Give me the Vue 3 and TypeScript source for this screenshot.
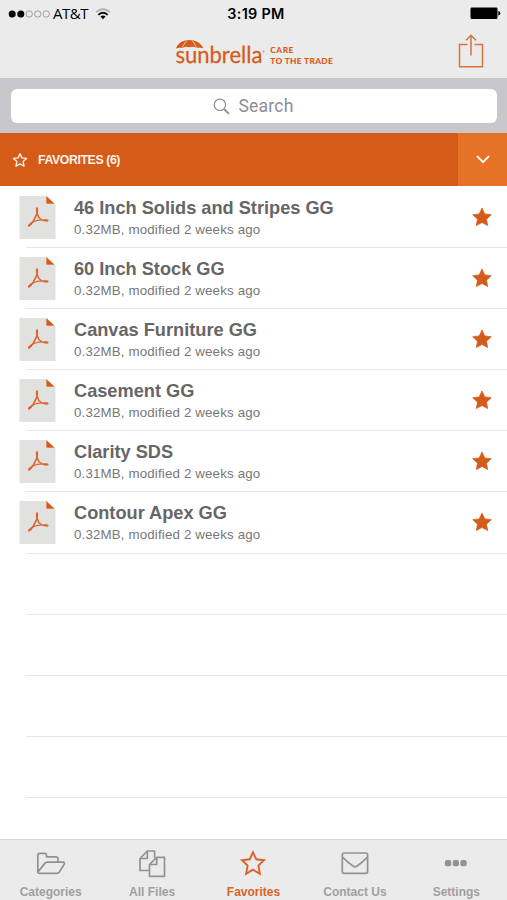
<script setup lang="ts">
interface FileRow {
  title: string
  size: string
}

const files: FileRow[] = [
  { title: '46 Inch Solids and Stripes GG', size: '0.32MB' },
  { title: '60 Inch Stock GG', size: '0.32MB' },
  { title: 'Canvas Furniture GG', size: '0.32MB' },
  { title: 'Casement GG', size: '0.32MB' },
  { title: 'Clarity SDS', size: '0.31MB' },
  { title: 'Contour Apex GG', size: '0.32MB' },
]

const tabs: string[] = ['Categories', 'All Files', 'Favorites', 'Contact Us', 'Settings']
const active = 'Favorites'
</script>

<template>
  <div class="screen">
    <header class="top">
      <div class="status">
        <div class="carrier">
          <svg width="42" height="10" viewBox="0 0 42 10">
            <circle cx="4.2" cy="5" r="3.5" />
            <circle cx="12.8" cy="5" r="3.5" />
            <g fill="none" stroke="#999" stroke-width=".9">
              <circle cx="21.2" cy="5" r="3.2" />
              <circle cx="29.7" cy="5" r="3.2" />
              <circle cx="38.2" cy="5" r="3.2" />
            </g>
          </svg>
          <span class="network">AT&amp;T</span>
          <svg class="wifi" width="16" height="12" viewBox="0 0 16 12">
            <path d="M1.2 4.2Q8-2 14.8 4.2" fill="none" stroke="#aaa" stroke-width="1.6" />
            <path d="M3.3 6.8Q8 2.6 12.7 6.8" fill="none" stroke="#111" stroke-width="1.8" />
            <path d="M5.4 8.6Q8 6.6 10.6 8.6L8 11.3Z" />
          </svg>
        </div>
        <span class="time">3:19 PM</span>
        <svg class="battery" width="31" height="13" viewBox="0 0 31 13">
          <rect x=".5" y=".5" width="27" height="11.6" rx="1.4" />
          <path d="M28.3 4q2 .4 2 2.3t-2 2.3z" />
        </svg>
      </div>
      <div class="nav">
        <svg class="logo" width="160" height="30" viewBox="0 0 160 30" fill="#d45c1a">
          <path d="M2 9.6C3.8 3.8 9.4 1 15.4 1s11.5 2.8 14 8.2l-3.1-.5-3.2.1-3.6-1.1-4.1.5-4-.5-3.1 1.2-3-.1Z" />
          <path d="M12.3 2 8 8.600M18.6 2l4.200 6.600" fill="none" stroke="#ebebeb" stroke-width=".7" />
          <text class="wordmark" x="1.4" y="24.2" textLength="87" lengthAdjust="spacingAndGlyphs">sunbrella</text>
          <circle cx="89.5" cy="12.5" r=".9" opacity=".6" />
          <text class="tagline" x="96.3" y="14" textLength="23" lengthAdjust="spacing">CARE</text>
          <text class="tagline" x="96.3" y="24.6" textLength="62.5" lengthAdjust="spacing">TO THE TRADE</text>
        </svg>
        <svg class="share" width="26" height="36" viewBox="0 0 26 36" fill="none" stroke="#d9733d" stroke-width="1.5">
          <path d="M9.5 10.5H1.5v22.3h23V10.5h-8M13 21.5V1.7M8 6.2l5-5 5 5" />
        </svg>
      </div>
    </header>

    <div class="search-bar">
      <div class="search-field">
        <svg width="17" height="17" viewBox="0 0 17 17" fill="none" stroke="#8e8e93">
          <circle cx="6.9" cy="6.8" r="5.7" stroke-width="1.2" />
          <path d="m11 11 5 4.800" stroke-width="1.8" />
        </svg>
        <span>Search</span>
      </div>
    </div>

    <div class="section">
      <div class="section-title">
        <svg width="16" height="16" viewBox="0 0 24 24" fill="none" stroke="#fff2e9" stroke-width="2" stroke-linejoin="round">
          <path d="m12 2.4 2.9 6.4 7 .8-5.2 4.8 1.4 6.9-6.1-3.4-6.1 3.4 1.4-6.9-5.2-4.8 7-.8Z" />
        </svg>
        <span>FAVORITES (6)</span>
      </div>
      <div class="section-toggle">
        <svg width="14" height="9" viewBox="0 0 14 9" fill="none" stroke="#fff" stroke-width="1.9">
          <path d="m1 1.2 6 6 6-6" />
        </svg>
      </div>
    </div>

    <main class="list">
      <div v-for="file in files" :key="file.title" class="row">
        <svg class="pdf" width="37" height="43" viewBox="0 0 37 43">
          <path d="M.5 0H27v8h9.500v42H.5Z" fill="#e1e1e0" />
          <path d="M27.300 0v7.800h8.400Z" fill="#d45c1a" />
          <g fill="none" stroke="#dc6531" stroke-linecap="round" stroke-linejoin="round">
            <path d="M18 12.300v5.500l-3.900 7.800-4.300 4" stroke-width="1.700" />
            <path d="M18.200 17.500l1.600 4 3.300 2.500 5.300.5" stroke-width="1.500" />
            <path d="M14 26l4.500-1.700 4.500-.4" stroke-width="1.200" />
            <path d="M18 12.600v3M10 29.500l2.200-1.900M25.500 24.300l2.900.2" stroke-width="2.200" />
          </g>
        </svg>
        <div class="info">
          <div class="title">{{ file.title }}</div>
          <div class="meta">{{ file.size }}, modified 2 weeks ago</div>
        </div>
        <svg class="star" width="20" height="20" viewBox="0 0 20 20" fill="#d45c1a" stroke="#d45c1a" stroke-width=".7" stroke-linejoin="round">
          <path d="m10 .9 2.800 6 6.500.8-4.800 4.500 1.200 6.400-5.700-3.100-5.700 3.100 1.200-6.400L.7 7.700l6.500-.8Z" />
        </svg>
      </div>
      <div v-for="n in 4" :key="n" class="row"></div>
    </main>

    <nav class="tabs">
      <div v-for="tab in tabs" :key="tab" class="tab" :class="{ active: tab === active }">
        <svg width="32" height="30" viewBox="0 0 32 30" fill="none" stroke="currentColor" stroke-width="1.7" stroke-linejoin="round">
          <path v-if="tab === 'Categories'" d="M2.800 23.200V6.400q0-2 2-2h4.700q2 0 2 2v1.400h9.300q2.200 0 2.200 2.200v3.200M2.800 23.200q.4 1.200 1.900 1.200h17.100q1.500 0 2.400-1.100l5-8.100q1-2-1.200-2H12.300q-1.500 0-2.500 1.200L3.200 22.600" />
          <g v-else-if="tab === 'All Files'">
            <path d="M13 21.500H4V9.500L11.300 2h7.300v7M11.300 2v7.500H4" />
            <path d="M13.500 15.500v11.800h15V8.300h-7.800L13.500 15.500h7.200V8.300" />
          </g>
          <path v-else-if="tab === 'Favorites'" d="m16 3.300 3.300 7 7.700.9-5.600 5.400 1.500 8.200-6.900-4.100-6.900 4.100 1.500-8.200L5 11.200l7.700-.9Z" stroke-linejoin="miter" stroke-width="1.900" />
          <g v-else-if="tab === 'Contact Us'">
            <rect x="3.300" y="4" width="25.300" height="20.300" rx="1.800" />
            <path d="M3.500 8.200q6 6 10.800 9.100 1.700 1.200 3.400 0Q22.500 14.200 28.500 8.200" />
          </g>
          <g v-else fill="currentColor" stroke="none">
            <rect x="4.900" y="11" width="6.300" height="6.300" rx="2" />
            <rect x="12.700" y="11" width="6.300" height="6.300" rx="2" />
            <rect x="20.400" y="11" width="6.300" height="6.300" rx="2" />
          </g>
        </svg>
        <span>{{ tab }}</span>
      </div>
    </nav>
  </div>
</template>

<style>
body {
  background: #fff;
}
</style>

<style scoped>
.screen {
  width: 507px;
  height: 900px;
  display: flex;
  flex-direction: column;
  background: #fff;
  font-family: "Liberation Sans", Arial, sans-serif;
  overflow: hidden;
}
svg {
  display: block;
  flex: none;
}
.top {
  height: 79px;
  flex: none;
  background: #ebebeb;
  border-bottom: 1px solid #c4c4c6;
  box-sizing: border-box;
}
.status {
  height: 27px;
  display: grid;
  grid-template-columns: 1fr auto 1fr;
  align-items: center;
  padding: 0 6px 0 8px;
}
.carrier {
  display: flex;
  align-items: center;
}
.network {
  margin-left: 3px;
  margin-top: -2px;
  font: 15px/20px "Open Sans", sans-serif;
  letter-spacing: -0.5px;
}
.wifi {
  margin-left: 7px;
}
.time {
  font: 600 14.4px/20px Inter, sans-serif;
  letter-spacing: 0.3px;
  padding: 1px 0 0 3px;
}
.battery {
  justify-self: end;
}
.nav {
  height: 51px;
  display: flex;
  justify-content: space-between;
  padding: 7px 23px 0 174px;
  box-sizing: border-box;
}
.logo {
  margin-top: 5px;
}
.wordmark {
  font: 23.5px Lato, sans-serif;
  text-rendering: geometricPrecision;
  stroke: #d45c1a;
  stroke-width: 0.25;
}
.tagline {
  font: 900 8.3px Lato, sans-serif;
  text-rendering: geometricPrecision;
}
.search-bar {
  height: 54px;
  flex: none;
  background: #c8c7cc;
  padding: 10px 10px 10px 11px;
  box-sizing: border-box;
}
.search-field {
  height: 34px;
  border-radius: 6px;
  background: #fff;
  display: flex;
  align-items: center;
  justify-content: center;
  gap: 9px;
  padding-right: 2px;
  color: #8e8e93;
  font: 17.5px/34px Roboto, sans-serif;
  letter-spacing: 0.2px;
}
.section {
  height: 53.4px;
  flex: none;
  display: flex;
  background: #d45c18;
}
.section-title {
  flex: 1;
  display: flex;
  align-items: center;
  gap: 10px;
  padding-left: 12px;
  color: #fff2e9;
  font-size: 12.3px;
  font-weight: bold;
  letter-spacing: -0.4px;
}
.section-toggle {
  width: 49px;
  display: flex;
  align-items: center;
  justify-content: center;
  background: #e57225;
}
.list {
  flex: 1;
  padding-top: 0.6px;
}
.row {
  height: 61.1px;
  display: flex;
  align-items: flex-start;
  box-sizing: border-box;
  padding: 9px 15px 0 19px;
  background: linear-gradient(#e6e6e6, #e6e6e6) 26px 100% / 481px 1px no-repeat;
}
.info {
  flex: 1;
  margin-left: 18px;
  color: #666;
  white-space: nowrap;
}
.title {
  font-size: 18.2px;
  font-weight: bold;
  line-height: 25px;
  height: 25px;
}
.meta {
  font-size: 13.3px;
  letter-spacing: 0.16px;
  line-height: 18px;
  color: #777;
}
.star {
  margin-top: 11px;
}
.tabs {
  height: 61px;
  flex: none;
  box-sizing: border-box;
  border-top: 1px solid #d4d4d4;
  background: #ebebeb;
  display: grid;
  grid-template-columns: repeat(5, 1fr);
}
.tab {
  display: flex;
  flex-direction: column;
  align-items: center;
  padding-top: 9px;
  color: #929292;
  font-size: 12px;
  font-weight: bold;
  line-height: 16px;
}
.tab span {
  margin-top: 5px;
  color: #a0a0a0;
}
.tab.active,
.tab.active span {
  color: #d9642a;
}
</style>
